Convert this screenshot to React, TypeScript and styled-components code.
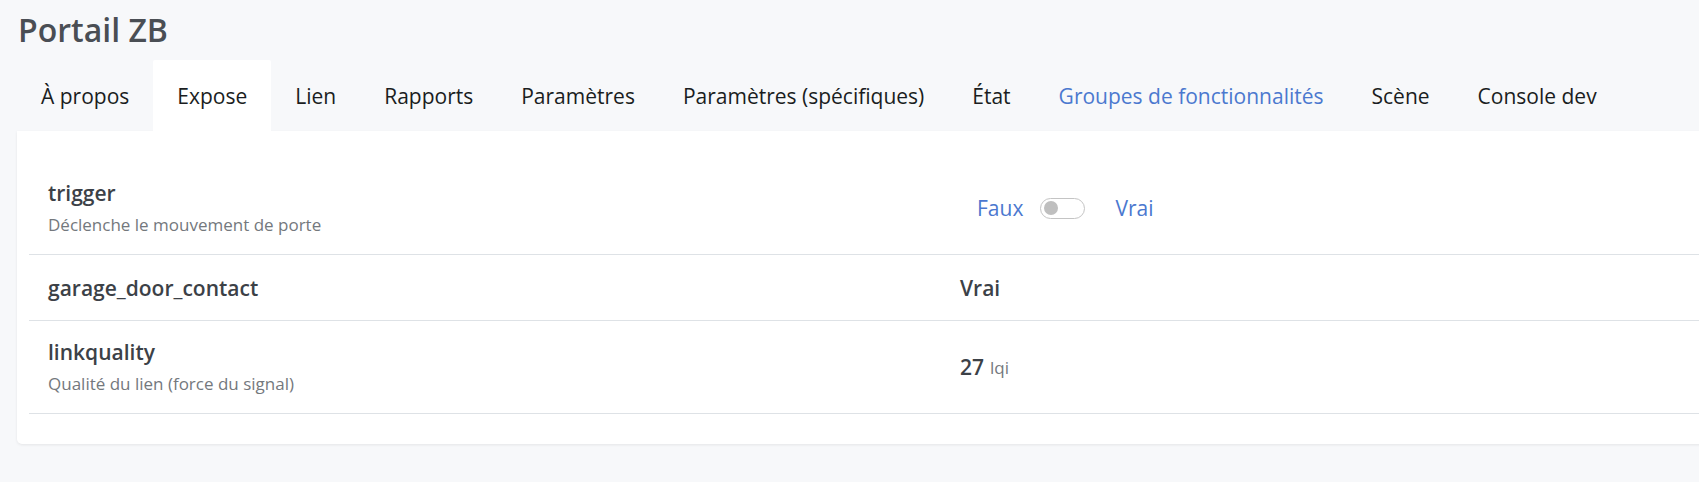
import styled, { createGlobalStyle } from "styled-components";

const GlobalStyle = createGlobalStyle`
  html, body {
    margin: 0;
    padding: 0;
    overflow: hidden;
    background-color: #f7f8fa;
  }
  body {
    font-family: "Open Sans", "Noto Sans", "Liberation Sans", sans-serif;
  }
`;

const Page = styled.div`
  width: 1882px;
  padding: 11px 17px 40px 17px;
  box-sizing: border-box;
`;

const Title = styled.h2`
  margin: 0 0 11px 1px;
  font-size: 32px;
  line-height: 1.2;
  font-weight: 600;
  color: #4a4e54;
`;

const TabBar = styled.nav`
  display: flex;
`;

const Tab = styled.div<{ $active?: boolean; $hover?: boolean }>`
  padding: 0 24px;
  height: 71px;
  display: flex;
  align-items: center;
  font-size: 21px;
  color: ${({ $hover }) => ($hover ? "#4b78cf" : "#1a1d21")};
  background-color: ${({ $active }) => ($active ? "#ffffff" : "transparent")};
  border-radius: 2px 2px 0 0;
  cursor: pointer;
`;

const Card = styled.div`
  background-color: #ffffff;
  padding: 31px 12px 30px;
  border-radius: 0 0 5px 5px;
  box-shadow: 0 1px 3px rgba(0, 0, 0, 0.08);
`;

const Row = styled.div<{ $tall?: boolean }>`
  display: grid;
  grid-template-columns: 1fr 1fr;
  align-items: center;
  min-height: ${({ $tall }) => ($tall ? "92px" : "65px")};
  border-bottom: 1px solid #dee2e6;
`;

const NameCell = styled.div`
  padding: 0 19px;
`;

const ValueCell = styled.div`
  padding: 0 19px;
  display: flex;
  align-items: center;
`;

const Name = styled.div`
  font-size: 21px;
  line-height: 32px;
  font-weight: 600;
  color: #3c4147;
`;

const Description = styled.div`
  margin-top: 2px;
  font-size: 17px;
  line-height: 28px;
  color: #74787d;
`;

const LinkButton = styled.button<{ $gap?: number }>`
  border: none;
  background: none;
  padding: 0 17px;
  margin-left: ${({ $gap }) => $gap ?? 0}px;
  font-family: inherit;
  font-size: 21px;
  color: #4b78cf;
  cursor: pointer;
`;

const Switch = styled.span`
  display: inline-flex;
  align-items: center;
  box-sizing: border-box;
  width: 45px;
  height: 21px;
  border: 1px solid #c4c4c4;
  border-radius: 11px;
  padding-left: 3px;
`;

const Knob = styled.span`
  width: 14px;
  height: 14px;
  border-radius: 50%;
  background-color: #bfbfbf;
`;

const Value = styled.span`
  font-size: 21px;
  font-weight: 600;
  color: #3c4147;
`;

const Unit = styled.span`
  margin-left: 6px;
  font-size: 17px;
  color: #74787d;
`;

const tabs = [
  "À propos",
  "Expose",
  "Lien",
  "Rapports",
  "Paramètres",
  "Paramètres (spécifiques)",
  "État",
  "Groupes de fonctionnalités",
  "Scène",
  "Console dev",
];

export default function App() {
  return (
    <>
      <GlobalStyle />
      <Page>
        <Title>Portail ZB</Title>
        <TabBar>
          {tabs.map((t) => (
            <Tab
              key={t}
              $active={t === "Expose"}
              $hover={t === "Groupes de fonctionnalités"}
            >
              {t}
            </Tab>
          ))}
        </TabBar>
        <Card>
          <Row $tall>
            <NameCell>
              <Name>trigger</Name>
              <Description>Déclenche le mouvement de porte</Description>
            </NameCell>
            <ValueCell>
              <LinkButton>Faux</LinkButton>
              <Switch>
                <Knob />
              </Switch>
              <LinkButton $gap={13}>Vrai</LinkButton>
            </ValueCell>
          </Row>
          <Row>
            <NameCell>
              <Name>garage_door_contact</Name>
            </NameCell>
            <ValueCell>
              <Value>Vrai</Value>
            </ValueCell>
          </Row>
          <Row $tall>
            <NameCell>
              <Name>linkquality</Name>
              <Description>Qualité du lien (force du signal)</Description>
            </NameCell>
            <ValueCell>
              <Value>27</Value>
              <Unit>lqi</Unit>
            </ValueCell>
          </Row>
        </Card>
      </Page>
    </>
  );
}
